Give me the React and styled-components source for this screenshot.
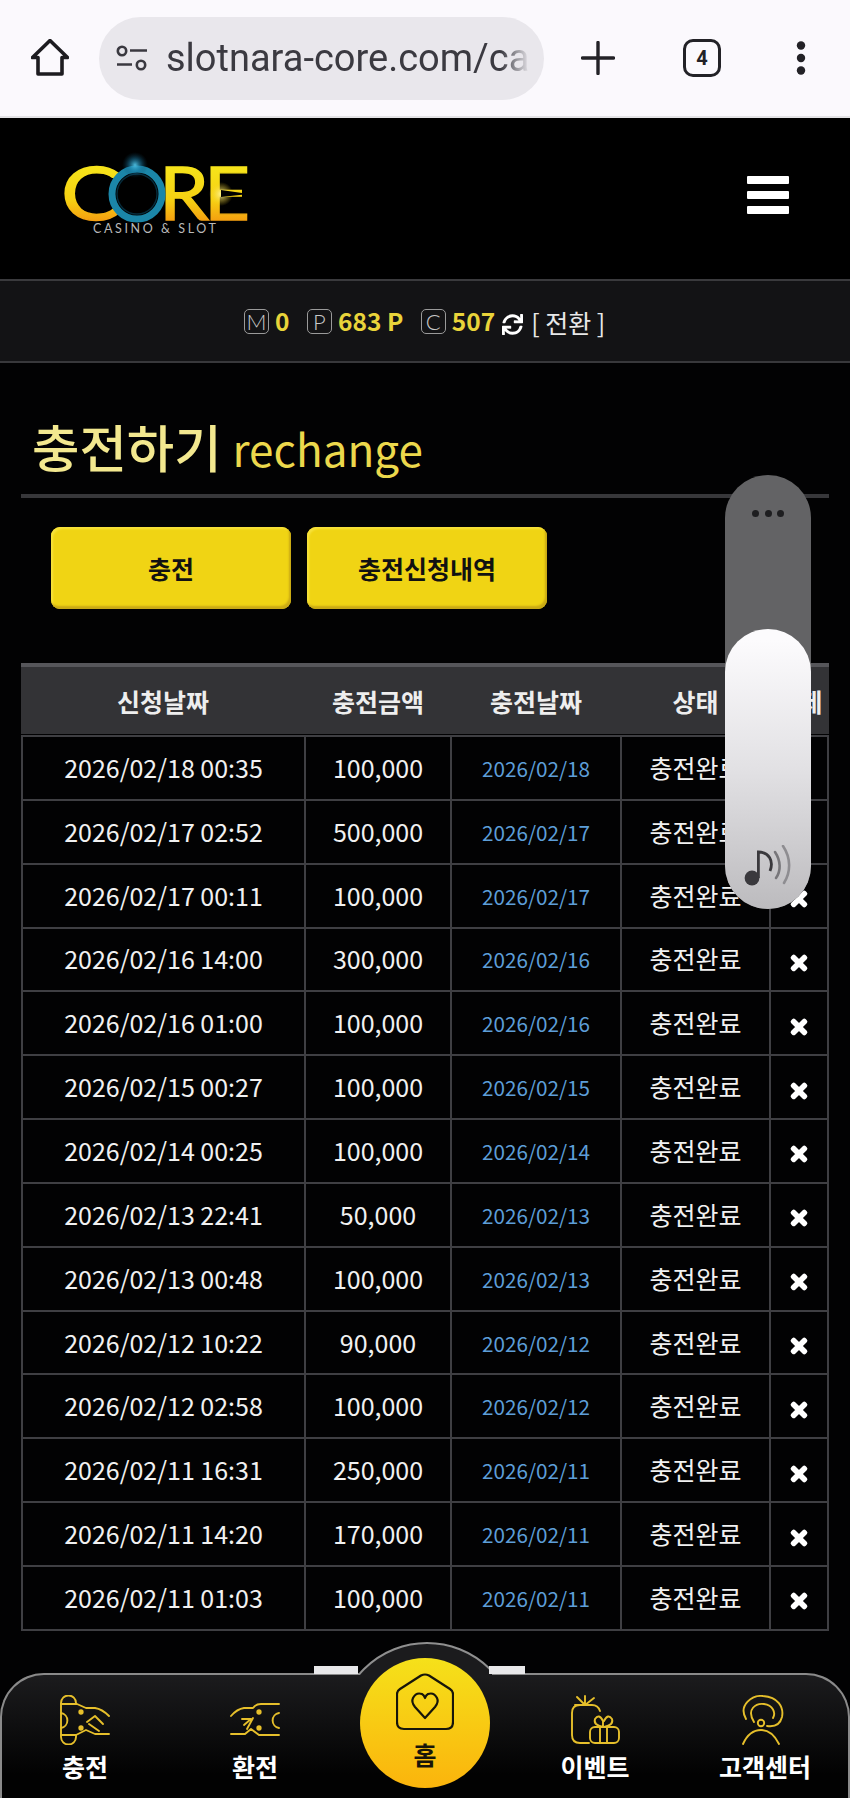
import React from "react";
import styled, { createGlobalStyle } from "styled-components";
import { FaSync, FaTimes } from "react-icons/fa";

const rows = [
    ["2026/02/18 00:35", "100,000", "2026/02/18"],
    ["2026/02/17 02:52", "500,000", "2026/02/17"],
    ["2026/02/17 00:11", "100,000", "2026/02/17"],
    ["2026/02/16 14:00", "300,000", "2026/02/16"],
    ["2026/02/16 01:00", "100,000", "2026/02/16"],
    ["2026/02/15 00:27", "100,000", "2026/02/15"],
    ["2026/02/14 00:25", "100,000", "2026/02/14"],
    ["2026/02/13 22:41", "50,000", "2026/02/13"],
    ["2026/02/13 00:48", "100,000", "2026/02/13"],
    ["2026/02/12 10:22", "90,000", "2026/02/12"],
    ["2026/02/12 02:58", "100,000", "2026/02/12"],
    ["2026/02/11 16:31", "250,000", "2026/02/11"],
    ["2026/02/11 14:20", "170,000", "2026/02/11"],
    ["2026/02/11 01:03", "100,000", "2026/02/11"],
];

const GlobalStyle = createGlobalStyle`
    * { box-sizing: border-box; }
    html, body { margin: 0; padding: 0; background: #020203; }
    body { font-family: "Noto Sans CJK KR", "Noto Sans", sans-serif; }
`;

const HomeIcon = () => (
    <svg width="38" height="38" viewBox="0 0 38 38" fill="none" stroke="#1d1c20" strokeWidth="3.6" strokeLinejoin="round" strokeLinecap="round">
        <path d="M1.5 18.5 L19 1.5 L36.5 18.5 H31 V35 H7 V18.5 Z" />
    </svg>
);

const TuneIcon = () => (
    <svg width="32" height="26" viewBox="0 0 32 26" fill="none" stroke="#3a3940" strokeWidth="2.6">
        <circle cx="6" cy="6" r="4.2" />
        <path d="M14 5.5 H31" />
        <circle cx="25" cy="20" r="4.2" />
        <path d="M1 19.5 H16" />
    </svg>
);

const PlusIcon = () => (
    <svg width="34" height="34" viewBox="0 0 34 34" stroke="#232227" strokeWidth="3.4" strokeLinecap="round">
        <path d="M17 1.5 V32.5 M1.5 17 H32.5" />
    </svg>
);

const MenuDots = () => (
    <svg width="10" height="34" viewBox="0 0 10 34" fill="#232227">
        <circle cx="5" cy="4.5" r="4.2" />
        <circle cx="5" cy="17" r="4.2" />
        <circle cx="5" cy="29.5" r="4.2" />
    </svg>
);

const CoreLogo = () => (
    <svg width="200" height="90" viewBox="0 0 200 90" overflow="visible">
        <defs>
            <linearGradient id="coreGold" gradientUnits="userSpaceOnUse" x1="0" y1="18" x2="0" y2="72">
                <stop offset="0" stopColor="#f6e31a" />
                <stop offset="0.6" stopColor="#f6d012" />
                <stop offset="1" stopColor="#f49c10" />
            </linearGradient>
            <radialGradient id="coreGlow">
                <stop offset="0" stopColor="#4fc3e6" stopOpacity="0.95" />
                <stop offset="0.5" stopColor="#1b7ea8" stopOpacity="0.5" />
                <stop offset="1" stopColor="#0a3c55" stopOpacity="0" />
            </radialGradient>
            <radialGradient id="coreFlare">
                <stop offset="0" stopColor="#fff6a0" stopOpacity="0.9" />
                <stop offset="1" stopColor="#f6d012" stopOpacity="0" />
            </radialGradient>
        </defs>
        <LogoLetter x="0" y="70" textLength="60" lengthAdjust="spacingAndGlyphs">C</LogoLetter>
        <LogoLetter x="98" y="70" textLength="50" lengthAdjust="spacingAndGlyphs">R</LogoLetter>
        <LogoLetter x="143" y="70" textLength="46" lengthAdjust="spacingAndGlyphs">E</LogoLetter>
        <circle cx="76" cy="44" r="25" fill="none" stroke="#1b86a8" strokeWidth="7" />
        <circle cx="76" cy="44" r="20" fill="none" stroke="#062c3c" strokeWidth="1.4" />
        <circle cx="74" cy="15" r="13" fill="url(#coreGlow)" />
        <circle cx="160" cy="44" r="12" fill="url(#coreFlare)" />
        <path d="M160 40 L188 44 L160 47 Z" fill="#000" />
        <LogoTagline x="32" y="83">CASINO &amp; SLOT</LogoTagline>
    </svg>
);

const MusicIcon = () => (
    <svg width="50" height="42" viewBox="0 0 50 42" fill="none">
        <circle cx="9" cy="33" r="7.4" fill="#3a393d" />
        <path d="M15.4 33 V7 C26 7 31 16 27 26" stroke="#3a393d" strokeWidth="2.8" />
        <path d="M32 7 C38 16 38 26 33 33" stroke="#77767a" strokeWidth="2.6" strokeLinecap="round" />
        <path d="M40 1 C48 13 48 27 41 38" stroke="#8e8d91" strokeWidth="2.6" strokeLinecap="round" />
    </svg>
);

const DepositIcon = () => (
    <svg width="50" height="50" viewBox="0 0 50 50" fill="none" stroke="#e6bf2b" strokeWidth="1.9" strokeLinecap="round" strokeLinejoin="round">
        <path d="M1 8 a7.5 7.5 0 0 1 15 0 V9 M1 8 V42 a7.5 7.5 0 0 0 15 0 V40" />
        <path d="M1 9 H17 L26 13 H35 Q42 14 49 21" />
        <path d="M1 40 H16 L26 35 L35 39 H49" />
        <path d="M1 18 a7.6 7.6 0 0 1 0 15" />
        <circle cx="21" cy="17" r="1.7" fill="#e6bf2b" />
        <circle cx="21" cy="33" r="1.7" fill="#e6bf2b" />
        <path d="M27 27 L35 21 L43 29 M29 29 L39 36" />
    </svg>
);

const WithdrawIcon = () => (
    <svg width="50" height="50" viewBox="0 0 50 50" fill="none" stroke="#e6bf2b" strokeWidth="1.9" strokeLinecap="round" strokeLinejoin="round">
        <path d="M49 9 H31 Q26 9 23 13 H14 Q7 14 1 21" />
        <path d="M1 39 H15 L21 34 L29 40 H49" />
        <path d="M49 18 a7.6 7.6 0 0 0 0 15" />
        <circle cx="29" cy="17" r="1.7" fill="#e6bf2b" />
        <circle cx="29" cy="33" r="1.7" fill="#e6bf2b" />
        <path d="M12 24 H21 L14 30 M23 23 L17 34" />
    </svg>
);

const EventIcon = () => (
    <svg width="50" height="50" viewBox="0 0 50 50" fill="none" stroke="#e6bf2b" strokeWidth="1.9" strokeLinecap="round" strokeLinejoin="round">
        <path d="M30 16 Q28 10 22 10 H10 Q2 10 2 18 V40 Q2 48 10 48 H19" />
        <path d="M15 10 L7 2 M15 10 L15 1 M15 10 L24 3 M15 10 L5 10" />
        <rect x="20" y="32" width="29" height="16" rx="5" />
        <path d="M30 32 V48 M37 32 V48" />
        <path d="M33 32 Q23 30 25 24 Q29 18 33 26 V32 M34 32 Q44 30 42 24 Q38 18 34 26" />
    </svg>
);

const SupportIcon = () => (
    <svg width="50" height="50" viewBox="0 0 50 50" fill="none" stroke="#e6bf2b" strokeWidth="1.9" strokeLinecap="round">
        <path d="M6 24 C-2 10 12 0 23 1 C38 2 44 12 42 22 C40 30 34 32 27 31" />
        <path d="M14 27 C6 14 16 8 24 9 C33 10 36 18 33 23" />
        <circle cx="21" cy="28" r="3.2" />
        <path d="M3 49 C8 38 15 35 21 35 C28 35 34 39 39 49" />
    </svg>
);

const HeartHouseIcon = () => (
    <svg width="58" height="58" viewBox="0 0 58 58" fill="none" stroke="#17150a" strokeWidth="2.2" strokeLinejoin="round">
        <path d="M4 16 L25 2.5 Q29 0.5 33 2.5 L54 16 Q57 18 57 21 V49 Q57 56 50 56 H8 Q1 56 1 49 V21 Q1 18 4 16 Z" />
        <path d="M29 45 L19 34 Q15 29 17 25 Q20 19 26 21 Q28 22 29 25 Q30 22 32 21 Q38 19 41 25 Q43 29 39 34 Z" />
    </svg>
);

export default function App() {
    return (
        <Page>
            <GlobalStyle />
            <BrowserBar>
                <HomeSlot><HomeIcon /></HomeSlot>
                <AddressPill>
                    <TuneIcon />
                    <AddressText>slotnara-core.com/ca</AddressText>
                </AddressPill>
                <PlusSlot><PlusIcon /></PlusSlot>
                <TabCount>4</TabCount>
                <DotsSlot><MenuDots /></DotsSlot>
            </BrowserBar>

            <SiteHeader>
                <LogoSlot><CoreLogo /></LogoSlot>
                <Hamburger><span /><span /><span /></Hamburger>
            </SiteHeader>

            <BalanceBar>
                <CoinBadge>M</CoinBadge>
                <Amount>0</Amount>
                <CoinBadge $gap>P</CoinBadge>
                <Amount>683 P</Amount>
                <CoinBadge $gap>C</CoinBadge>
                <Amount>507</Amount>
                <SyncSlot><FaSync size={21} /></SyncSlot>
                <SwitchText>[ 전환 ]</SwitchText>
            </BalanceBar>

            <TitleRow>
                <TitleKo>충전하기</TitleKo>
                <TitleEn>rechange</TitleEn>
            </TitleRow>

            <ButtonRow>
                <YellowButton>충전</YellowButton>
                <YellowButton>충전신청내역</YellowButton>
            </ButtonRow>

            <HistoryTable>
                <HeaderRow>
                    <HeadCell>신청날짜</HeadCell>
                    <HeadCell>충전금액</HeadCell>
                    <HeadCell>충전날짜</HeadCell>
                    <HeadCell>상태</HeadCell>
                    <HeadCell>삭제</HeadCell>
                </HeaderRow>
                <BodyRows>
                    {rows.map((row) => (
                        <BodyRow key={row[0]}>
                            <Cell>{row[0]}</Cell>
                            <Cell>{row[1]}</Cell>
                            <DateCell>{row[2]}</DateCell>
                            <Cell>충전완료</Cell>
                            <DeleteCell><FaTimes size={22} color="#fff" stroke="#fff" strokeWidth={36} /></DeleteCell>
                        </BodyRow>
                    ))}
                </BodyRows>
            </HistoryTable>

            <VolumeSlider>
                <SliderDots><i /><i /><i /></SliderDots>
                <SliderFill><MusicIcon /></SliderFill>
            </VolumeSlider>

            <BottomNav>
                <Bump />
                <Chip $left="314px" $width="44px" />
                <Chip $left="489px" $width="36px" />
                <NavItem><DepositIcon /><NavLabel>충전</NavLabel></NavItem>
                <NavItem><WithdrawIcon /><NavLabel>환전</NavLabel></NavItem>
                <HomeButton>
                    <HeartHouseIcon />
                    <HomeLabel>홈</HomeLabel>
                </HomeButton>
                <NavItem><EventIcon /><NavLabel>이벤트</NavLabel></NavItem>
                <NavItem><SupportIcon /><NavLabel>고객센터</NavLabel></NavItem>
            </BottomNav>
        </Page>
    );
}

const Page = styled.div`
    position: relative;
    width: 850px;
    height: 1798px;
    overflow: hidden;
    background: #020203;
    color: #f2f2f2;
`;

const BrowserBar = styled.div`
    height: 118px;
    display: flex;
    align-items: center;
    background: #fbf9fd;
    border-bottom: 2px solid #e4e3e6;
`;

const HomeSlot = styled.div`
    display: flex;
    margin-left: 31px;
    margin-right: 30px;
`;

const AddressPill = styled.div`
    width: 445px;
    height: 83px;
    display: flex;
    align-items: center;
    gap: 18px;
    padding-left: 17px;
    border-radius: 42px;
    background: #e9e7ec;
    overflow: hidden;
`;

const AddressText = styled.span`
    width: 364px;
    overflow: hidden;
    white-space: nowrap;
    font-family: Roboto, sans-serif;
    font-size: 38px;
    color: #3b3a41;
    mask-image: linear-gradient(to right, #000 92%, transparent);
`;

const PlusSlot = styled.div`
    display: flex;
    margin-left: 37px;
    margin-right: 68px;
`;

const TabCount = styled.div`
    width: 38px;
    height: 38px;
    display: flex;
    align-items: center;
    justify-content: center;
    border: 3.5px solid #232227;
    border-radius: 10px;
    font-family: Roboto, sans-serif;
    font-size: 20px;
    font-weight: 700;
    color: #232227;
`;

const DotsSlot = styled.div`
    display: flex;
    margin-left: 75px;
`;

const SiteHeader = styled.div`
    height: 163px;
    display: flex;
    align-items: flex-start;
    justify-content: space-between;
    background: #000;
    border-bottom: 2px solid #3a3a3d;
`;

const LogoSlot = styled.div`
    display: flex;
    margin-top: 32px;
    margin-left: 61px;
`;

const LogoLetter = styled.text`
    font-family: Lato, sans-serif;
    font-size: 73px;
    font-weight: 400;
    fill: url(#coreGold);
    stroke: url(#coreGold);
    stroke-width: 1.4px;
`;

const LogoTagline = styled.text`
    font-family: Lato, sans-serif;
    font-size: 12.5px;
    letter-spacing: 2.6px;
    fill: #b9b9b9;
`;

const Hamburger = styled.div`
    display: flex;
    flex-direction: column;
    gap: 7px;
    margin-top: 58px;
    margin-right: 61px;

    span {
        display: block;
        width: 42px;
        height: 8px;
        background: #fff;
        border-radius: 1px;
    }
`;

const BalanceBar = styled.div`
    height: 82px;
    display: flex;
    align-items: center;
    padding-left: 244px;
    background: #131315;
    border-bottom: 2px solid #38383b;
`;

const CoinBadge = styled.span`
    width: 25px;
    height: 25px;
    display: flex;
    align-items: center;
    justify-content: center;
    margin-left: ${(p) => (p.$gap ? "17.5px" : "0")};
    margin-right: 6px;
    border: 1.5px solid #9a9a9a;
    border-radius: 5px;
    font-family: Lato, sans-serif;
    font-size: 22px;
    font-weight: 300;
    color: #c9c9c9;
`;

const Amount = styled.span`
    font-size: 24.5px;
    font-weight: 700;
    line-height: 30px;
    color: #e9d43a;
`;

const SyncSlot = styled.span`
    display: flex;
    margin-top: 6px;
    margin-left: 7px;
    margin-right: 8px;
    color: #fff;
`;

const SwitchText = styled.span`
    margin-top: 2px;
    font-size: 25px;
    line-height: 30px;
    color: #e8e8e8;
    white-space: pre;
`;

const TitleRow = styled.div`
    height: 135px;
    display: flex;
    align-items: flex-end;
    gap: 11px;
    margin: 0 21px;
    padding-left: 11px;
    padding-bottom: 15px;
    border-bottom: 4px solid #37373a;
`;

const TitleKo = styled.h2`
    margin: 0;
    font-size: 51.5px;
    font-weight: 500;
    line-height: 66px;
    color: #f3e88f;
`;

const TitleEn = styled.span`
    font-size: 44px;
    font-weight: 400;
    line-height: 62px;
    color: #ecd84c;
`;

const ButtonRow = styled.div`
    display: flex;
    gap: 16px;
    margin: 29px 0 54px 51px;
`;

const YellowButton = styled.button`
    width: 240px;
    height: 82px;
    border: 0;
    border-radius: 9px;
    background: #f0d414;
    box-shadow: inset -2px -3px 2px #c9a915, inset 2px 2px 2px #f7e23c;
    font-family: inherit;
    font-size: 25px;
    font-weight: 700;
    color: #111;
`;

const HistoryTable = styled.div`
    width: 808px;
    margin-left: 21px;
`;

const HeaderRow = styled.div`
    height: 71px;
    display: grid;
    grid-template-columns: 284px 146px 170px 149px 59px;
    background: #333336;
    border-top: 4px solid #56565a;
`;

const HeadCell = styled.div`
    display: flex;
    align-items: center;
    justify-content: center;
    font-size: 25px;
    font-weight: 700;
    color: #eee;
`;

const BodyRows = styled.div`
    margin-top: 1px;
    border-top: 2px solid #3f3f43;
    border-left: 2px solid #3f3f43;
`;

const BodyRow = styled.div`
    height: 63.85px;
    display: grid;
    grid-template-columns: 283px 146px 170px 149px 58px;
    border-bottom: 2.5px solid #3f3f43;
`;

const Cell = styled.div`
    display: flex;
    align-items: center;
    justify-content: center;
    padding-bottom: 2px;
    border-right: 2px solid #3f3f43;
    font-size: 25px;
    color: #f1f1f1;
`;

const DateCell = styled(Cell)`
    padding-bottom: 0;
    font-size: 20.7px;
    color: #5d9ed8;
`;

const DeleteCell = styled(Cell)`
    padding-top: 7px;
    padding-bottom: 0;
`;

const VolumeSlider = styled.div`
    position: absolute;
    top: 475px;
    left: 725px;
    width: 86px;
    height: 434px;
    display: flex;
    flex-direction: column;
    justify-content: space-between;
    border-radius: 43px;
    background: #636365;
`;

const SliderDots = styled.div`
    display: flex;
    justify-content: center;
    gap: 5.5px;
    margin-top: 35px;

    i {
        width: 7px;
        height: 7px;
        border-radius: 50%;
        background: #1e1e20;
    }
`;

const SliderFill = styled.div`
    height: 280px;
    display: flex;
    align-items: flex-end;
    padding: 0 0 22px 18px;
    border-radius: 43px;
    background: linear-gradient(#fcfbfd 4%, #e2e1e4 50%, #bcbbbe);
`;

const BottomNav = styled.nav`
    position: absolute;
    left: 0;
    right: 0;
    bottom: -2px;
    height: 127px;
    display: grid;
    grid-template-columns: repeat(5, 170px);
    padding-top: 22px;
    border-radius: 44px 44px 0 0;
    background: linear-gradient(#1c1c1e, #020202 80%);
    box-shadow: inset 0 0 0 2px #8a8a8a;
`;

const Bump = styled.div`
    position: absolute;
    top: -31px;
    left: 358px;
    width: 134px;
    height: 33px;
    overflow: hidden;

    &::before {
        content: "";
        position: absolute;
        top: 0;
        left: -21px;
        width: 176px;
        height: 176px;
        border: 2px solid #8f8f8f;
        border-radius: 50%;
        background: #1b1b1d;
    }
`;

const Chip = styled.div`
    position: absolute;
    top: -7px;
    left: ${(p) => p.$left};
    width: ${(p) => p.$width};
    height: 8px;
    background: #e8e8ea;
`;

const NavItem = styled.div`
    display: flex;
    flex-direction: column;
    align-items: center;
    gap: 6px;
`;

const NavLabel = styled.span`
    font-size: 25px;
    font-weight: 700;
    line-height: 30px;
    color: #fff;
    white-space: nowrap;
`;

const HomeButton = styled.div`
    position: relative;
    justify-self: center;
    width: 130px;
    height: 130px;
    margin-top: -37px;
    display: flex;
    flex-direction: column;
    align-items: center;
    padding-top: 15px;
    border-radius: 50%;
    background: linear-gradient(#f5e11a, #fbb40c);
`;

const HomeLabel = styled.span`
    margin-top: 8px;
    font-size: 25px;
    font-weight: 700;
    line-height: 30px;
    color: #17150a;
`;
